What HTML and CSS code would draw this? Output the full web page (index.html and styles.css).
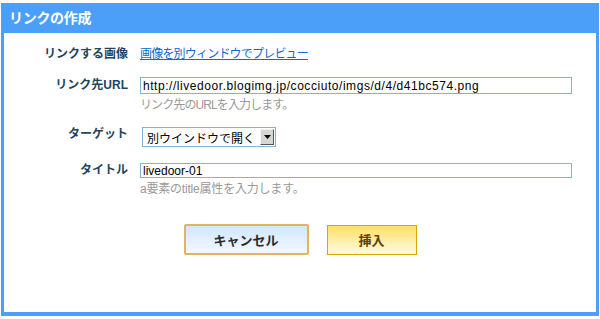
FILE: index.html
```html
<!DOCTYPE html>
<html lang="ja">

<head>
    <meta charset="UTF-8">
    <title>リンクの作成</title>
    <link rel="stylesheet" href="styles.css">
</head>

<body>
    <div class="dialog">
        <header class="dialog-title">リンクの作成</header>

        <div class="dialog-body">
            <div class="row row-image">
                <span class="label">リンクする画像</span>
                <div class="field">
                    <a href="#" class="preview-link">画像を別ウィンドウでプレビュー</a>
                </div>
            </div>

            <div class="row row-url">
                <label class="label" for="linkUrl">リンク先URL</label>
                <div class="field">
                    <input type="text" id="linkUrl" class="text-input url-input"
                        value="http://livedoor.blogimg.jp/cocciuto/imgs/d/4/d41bc574.png">
                    <p class="hint">リンク先のURLを入力します。</p>
                </div>
            </div>

            <div class="row row-target">
                <span class="label">ターゲット</span>
                <div class="field">
                    <div class="select-box">
                        <span class="select-text">別ウインドウで開く</span>
                        <span class="select-arrow">
                            <svg width="7" height="4" viewBox="0 0 7 4"><path d="M0 0h7L3.5 4z" fill="#000"/></svg>
                        </span>
                    </div>
                </div>
            </div>

            <div class="row row-title">
                <label class="label" for="linkTitle">タイトル</label>
                <div class="field">
                    <input type="text" id="linkTitle" class="text-input title-input" value="livedoor-01">
                    <p class="hint hint-title">a要素のtitle属性を入力します。</p>
                </div>
            </div>

            <!-- buttons -->
            <div class="buttons">
                <button type="button" class="btn btn-cancel">キャンセル</button>
                <button type="button" class="btn btn-insert">挿入</button>
            </div>
        </div>
    </div>
</body>

</html>
```

FILE: styles.css
```css
/* Reset */
body, p {
    margin: 0;
    padding: 0;
}

body {
    font-family: "Liberation Sans", "Noto Sans CJK JP", sans-serif;
    font-size: 12px;
    background-color: #fff;
    color: #333;
    padding-top: 3px;
    padding-left: 1px;
}

/* Dialog frame */
.dialog {
    width: 598px;
    height: 313px;
    box-sizing: border-box;
    border: 3px solid #4c9ff8;
    border-top: none;
    border-bottom-width: 4px;
    background-color: #fff;
}

.dialog-title {
    height: 30px;
    line-height: 30px;
    margin: 0 -3px;
    padding-left: 8px;
    background-color: #4c9ff8;
    color: #fff;
    font-size: 14px;
    font-weight: bold;
    letter-spacing: -0.3px;
}

.dialog-body {
    padding-top: 13px;
}

/* Form rows */
.row {
    display: flex;
    align-items: flex-start;
}

.label {
    width: 124px;
    flex: none;
    text-align: right;
    font-weight: bold;
    color: #1f4560;
    line-height: 16px;
}

.field {
    margin-left: 12px;
    flex: 1;
}

.row-url {
    margin-top: 15px;
}

.row-target {
    margin-top: 13px;
}

.row-title {
    margin-top: 15px;
}

.preview-link {
    color: #1168d0;
    line-height: 16px;
    letter-spacing: -0.8px;
}

.text-input {
    display: block;
    width: 432px;
    box-sizing: border-box;
    border: 1px solid #7fb3d8;
    padding: 0 2px;
    font-family: "Liberation Sans", "Noto Sans CJK JP", sans-serif;
    font-size: 12px;
    color: #000;
    outline: none;
}

.url-input {
    height: 17px;
    letter-spacing: 0.55px;
}

.title-input {
    height: 15px;
    margin-top: 1px;
}

.hint {
    color: #999;
    line-height: 16px;
    margin-top: 3px;
    letter-spacing: -0.9px;
}

.hint-title {
    letter-spacing: -0.2px;
}

/* Fake select */
.select-box {
    display: flex;
    align-items: center;
    width: 134px;
    height: 20px;
    box-sizing: border-box;
    margin-left: 2px;
    margin-top: 1px;
    border: 1px solid #7fb3d8;
    padding: 1px;
}

.select-text {
    flex: 1;
    padding-left: 3px;
    font-size: 12px;
    color: #000;
}

.select-arrow {
    width: 14px;
    height: 16px;
    box-sizing: border-box;
    display: flex;
    align-items: center;
    justify-content: center;
    background-color: #d8d6d0;
    border: 1px solid;
    border-color: #f4f4f4 #555 #555 #f4f4f4;
}

/* Buttons */
.buttons {
    display: flex;
    justify-content: center;
    align-items: center;
    gap: 18px;
    margin-top: 27px;
}

.btn {
    font-family: "Liberation Sans", "Noto Sans CJK JP", sans-serif;
    font-size: 13px;
    font-weight: bold;
    cursor: pointer;
    padding: 0;
}

.btn-cancel {
    width: 125px;
    height: 31px;
    border: 2px solid #e2b45c;
    border-radius: 2px;
    background: linear-gradient(#d2e7fd, #f2f8ff);
    color: #2a2a2a;
}

.btn-insert {
    width: 90px;
    height: 30px;
    border: 1px solid #d9a800;
    background: linear-gradient(#ffe065, #fffbe4);
    color: #5c4200;
}
```
